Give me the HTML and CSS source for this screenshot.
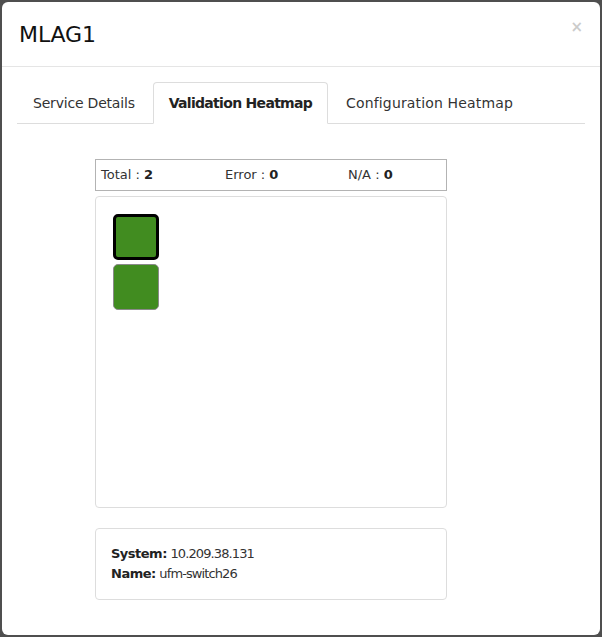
FILE: index.html
```html
<!DOCTYPE html>
<html>
<head>
<meta charset="utf-8">
<link rel="stylesheet" href="styles.css">
</head>
<body>
<div class="modal">
  <div class="modal-header">
    <h4 class="modal-title">MLAG1</h4>
    <button class="close" type="button">×</button>
  </div>
  <div class="modal-body">
    <ul class="nav-tabs">
      <li class="tab">Service Details</li>
      <li class="tab active">Validation Heatmap</li>
      <li class="tab">Configuration Heatmap</li>
    </ul>
    <div class="tab-content">
      <div class="heatmap-col">
        <div class="stats">
          <span>Total : <b>2</b></span>
          <span>Error : <b>0</b></span>
          <span>N/A : <b>0</b></span>
        </div>
        <div class="panel heatmap">
          <div class="cell selected"></div>
          <div class="cell"></div>
        </div>
        <div class="panel info">
          <div><b>System:</b> <span class="val">10.209.38.131</span></div>
          <div><b>Name:</b> <span class="val">ufm-switch26</span></div>
        </div>
      </div>
    </div>
  </div>
</div>
</body>
</html>
```
FILE: styles.css
```css
* { box-sizing: border-box; }
html, body { margin: 0; padding: 0; }
body {
  background: #4f4f4f;
  padding: 2px;
  width: 602px;
  height: 637px;
  font-family: "DejaVu Sans", sans-serif;
  color: #333;
}
.modal {
  width: 598px;
  height: 633px;
  background: #fff;
  border-radius: 6px;
  overflow: hidden;
}
.modal-header {
  display: flex;
  justify-content: space-between;
  align-items: flex-start;
  padding: 16px 15px 15px 17px;
  border-bottom: 1px solid #e5e5e5;
}
.modal-title {
  margin: 0;
  font-size: 22px;
  line-height: 33px;
  font-weight: normal;
  color: #111;
  letter-spacing: -0.1px;
}
.close {
  background: none;
  border: 0;
  padding: 0;
  margin: 2px 2px 0 0;
  font-family: "DejaVu Sans", sans-serif;
  font-size: 15px;
  font-weight: bold;
  line-height: 1;
  color: #000;
  opacity: 0.2;
}
.modal-body {
  padding: 15px;
}
.nav-tabs {
  display: flex;
  list-style: none;
  margin: 0;
  padding: 0;
  border-bottom: 1px solid #ddd;
}
.tab {
  padding: 10px 15px;
  line-height: 20px;
  font-size: 14px;
  color: #333;
  border: 1px solid transparent;
  border-radius: 4px 4px 0 0;
  margin-right: 2px;
  margin-bottom: -1px;
  white-space: nowrap;
}
.tab:first-child {
  letter-spacing: -0.2px;
}
.tab:last-child {
  letter-spacing: 0.15px;
}
.tab.active {
  border-color: #ddd;
  border-bottom-color: #fff;
  background: #fff;
  font-weight: bold;
  color: #222;
  letter-spacing: -0.7px;
}
.tab-content {
  padding: 35px 0 0 78px;
}
.heatmap-col {
  width: 352px;
}
.stats {
  display: grid;
  grid-template-columns: 124px 123px auto;
  height: 32px;
  padding: 0 5px;
  border: 1px solid #b3b3b3;
  font-size: 13px;
  line-height: 30px;
  color: #333;
}
.stats b { color: #222; }
.panel {
  border: 1px solid #ddd;
  border-radius: 4px;
}
.heatmap {
  margin-top: 5px;
  height: 312px;
  padding: 17px;
  display: flex;
  flex-direction: column;
  gap: 4px;
}
.cell {
  width: 46px;
  height: 46px;
  background: #418c20;
  border: 1px solid #8a8a8a;
  border-radius: 5px;
}
.cell.selected {
  border: 3px solid #000;
}
.info {
  margin-top: 20px;
  padding: 15px;
  font-size: 13px;
  line-height: 20px;
  letter-spacing: -0.5px;
  color: #333;
}
.info .val { letter-spacing: -0.9px; }
.info b { color: #222; }
```
